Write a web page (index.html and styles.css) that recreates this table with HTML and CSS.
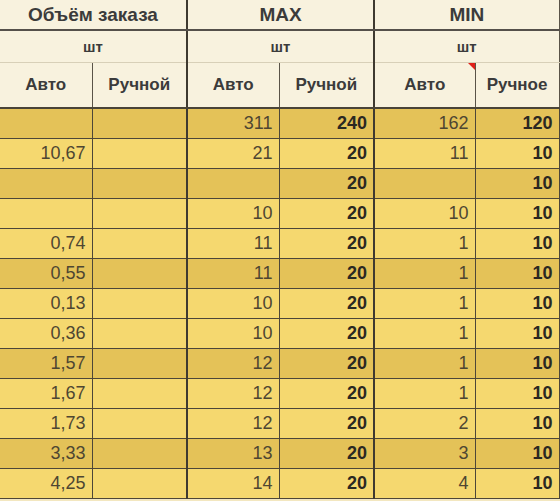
FILE: index.html
```html
<!DOCTYPE html>
<html>
<head>
<meta charset="utf-8">
<link rel="stylesheet" href="styles.css">
</head>
<body>
<table class="grid">
  <colgroup>
    <col class="c1"><col class="c2"><col class="c3"><col class="c4"><col class="c5"><col class="c6">
  </colgroup>
  <thead>
    <tr class="h1">
      <th colspan="2" class="g">Объём заказа</th>
      <th colspan="2" class="g">MAX</th>
      <th colspan="2">MIN</th>
    </tr>
    <tr class="h2">
      <th colspan="2" class="g">шт</th>
      <th colspan="2" class="g">шт</th>
      <th colspan="2">шт</th>
    </tr>
    <tr class="h3">
      <th>Авто</th>
      <th class="g">Ручной</th>
      <th>Авто</th>
      <th class="g">Ручной</th>
      <th class="note">Авто<span class="tri"></span></th>
      <th>Ручное</th>
    </tr>
  </thead>
  <tbody>
    <tr class="dk"><td></td><td class="m g"></td><td>311</td><td class="m g">240</td><td>162</td><td class="m">120</td></tr>
    <tr><td>10,67</td><td class="m g"></td><td>21</td><td class="m g">20</td><td>11</td><td class="m">10</td></tr>
    <tr class="dk"><td></td><td class="m g"></td><td></td><td class="m g">20</td><td></td><td class="m">10</td></tr>
    <tr><td></td><td class="m g"></td><td>10</td><td class="m g">20</td><td>10</td><td class="m">10</td></tr>
    <tr><td>0,74</td><td class="m g"></td><td>11</td><td class="m g">20</td><td>1</td><td class="m">10</td></tr>
    <tr class="dk"><td>0,55</td><td class="m g"></td><td>11</td><td class="m g">20</td><td>1</td><td class="m">10</td></tr>
    <tr><td>0,13</td><td class="m g"></td><td>10</td><td class="m g">20</td><td>1</td><td class="m">10</td></tr>
    <tr><td>0,36</td><td class="m g"></td><td>10</td><td class="m g">20</td><td>1</td><td class="m">10</td></tr>
    <tr class="dk"><td>1,57</td><td class="m g"></td><td>12</td><td class="m g">20</td><td>1</td><td class="m">10</td></tr>
    <tr><td>1,67</td><td class="m g"></td><td>12</td><td class="m g">20</td><td>1</td><td class="m">10</td></tr>
    <tr><td>1,73</td><td class="m g"></td><td>12</td><td class="m g">20</td><td>2</td><td class="m">10</td></tr>
    <tr class="dk"><td>3,33</td><td class="m g"></td><td>13</td><td class="m g">20</td><td>3</td><td class="m">10</td></tr>
    <tr><td>4,25</td><td class="m g"></td><td>14</td><td class="m g">20</td><td>4</td><td class="m">10</td></tr>
  </tbody>
</table>
</body>
</html>
```
FILE: styles.css
```css
html, body {
  margin: 0;
  padding: 0;
  background: #f3e7c0;
}
body {
  width: 560px;
  height: 501px;
  overflow: hidden;
  font-family: "Liberation Sans", Arial, sans-serif;
}
.grid {
  border-collapse: collapse;
  table-layout: fixed;
  width: 559px;
}
.c1 { width: 92px; }
.c2 { width: 95px; }
.c3 { width: 92px; }
.c4 { width: 95px; }
.c5 { width: 101px; }
.c6 { width: 84px; }

th {
  background: #f8f2de;
  color: #3b3b3b;
  font-weight: bold;
  text-align: center;
  padding: 0;
  border-left: 1px solid #5a5448;
  border-right: 1px solid #5a5448;
  border-bottom: 1px solid #5a5448;
}
th:first-child { border-left: none; }
.h1 th {
  height: 29px;
  font-size: 19px;
  border-bottom: 2px solid #55504a;
}
.h2 th {
  height: 31px;
  font-size: 15px;
  border-bottom: 1px solid #d8d0b8;
}
.h3 th {
  height: 44px;
  font-size: 17px;
  border-bottom: 2px solid #4a4437;
}
.note { position: relative; }
.tri {
  position: absolute;
  right: 0;
  top: 0;
  width: 0;
  height: 0;
  border-top: 7px solid #e0201a;
  border-left: 7px solid transparent;
}
td {
  height: 29px;
  padding: 0 6px 0 0;
  text-align: right;
  font-size: 18px;
  color: #4e4632;
  background: #f5d86f;
  border: 1px solid #4d4638;
  border-top: none;
}
td:first-child { border-left: none; }
tr.dk td { background: #e4c258; }
td.m {
  font-weight: bold;
  color: #2b2822;
}
.g { border-right: 2px solid #3f3a30; }
th.g { border-right: 2px solid #3f3a30; }
```
